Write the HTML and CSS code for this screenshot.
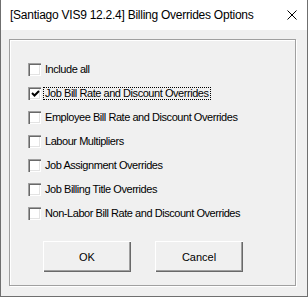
FILE: index.html
```html
<!DOCTYPE html>
<html lang="en">
<head>
    <meta charset="UTF-8">
    <meta name="viewport" content="width=device-width, initial-scale=1.0">
    <title>Billing Overrides Options</title>
    <link rel="stylesheet" href="styles.css">
</head>
<body>
    <div class="window">
        <div class="titlebar">
            <span class="title">[Santiago VIS9 12.2.4] Billing Overrides Options</span>
            <svg class="close" width="10" height="10" viewBox="0 0 10 10">
                <path d="M0.5 0.5 L9.5 9.5 M9.5 0.5 L0.5 9.5" stroke="#000" stroke-width="1" fill="none"/>
            </svg>
        </div>
        <div class="content">
            <div class="group">
                <div class="row">
                    <span class="check"></span>
                    <span class="label">Include all</span>
                </div>
                <div class="row">
                    <span class="check">
                        <svg width="9" height="9" viewBox="0 0 9 9">
                            <path d="M1 4 L3.5 6.5 L8 2" stroke="#000" stroke-width="2" fill="none"/>
                        </svg>
                    </span>
                    <span class="label focus">Job Bill Rate and Discount Overrides</span>
                </div>
                <div class="row">
                    <span class="check"></span>
                    <span class="label">Employee Bill Rate and Discount Overrides</span>
                </div>
                <div class="row">
                    <span class="check"></span>
                    <span class="label">Labour Multipliers</span>
                </div>
                <div class="row">
                    <span class="check"></span>
                    <span class="label">Job Assignment Overrides</span>
                </div>
                <div class="row">
                    <span class="check"></span>
                    <span class="label">Job Billing Title Overrides</span>
                </div>
                <div class="row">
                    <span class="check"></span>
                    <span class="label">Non-Labor Bill Rate and Discount Overrides</span>
                </div>
                <div class="buttons">
                    <button class="btn">OK</button>
                    <button class="btn">Cancel</button>
                </div>
            </div>
        </div>
    </div>
</body>
</html>
```

FILE: styles.css
```css
* {
    padding: 0;
    margin: 0;
    box-sizing: border-box;
}
body {
    background: #f0f0f0;
    font-family: "Liberation Sans", Arial, sans-serif;
}
.window {
    width: 308px;
    height: 297px;
    background: #f0f0f0;
    border: 1px solid #6f6f6f;
    border-top: none;
}
.titlebar {
    height: 30px;
    background: #fff;
    display: flex;
    align-items: center;
    justify-content: space-between;
    padding: 0 10px 0 9px;
}
.title {
    font-size: 12px;
    letter-spacing: -0.25px;
    color: #000;
}
.close {
    margin-top: -1px;
}
.content {
    padding: 9px 0 0 8px;
}
.group {
    width: 287px;
    height: 247px;
    border: 1px solid #a0a0a0;
    box-shadow: inset 1px 1px 0 #fff, 1px 1px 0 #fff;
    padding: 17px 0 0 18px;
}
.row {
    height: 24px;
    display: flex;
    align-items: center;
}
.check {
    width: 13px;
    height: 13px;
    background: #fff;
    box-shadow: inset 1px 1px 0 #a0a0a0, inset 2px 2px 0 #696969, inset -1px -1px 0 #fff, inset -2px -2px 0 #e3e3e3;
    display: flex;
    align-items: center;
    justify-content: center;
}
.check svg {
    margin-left: 1px;
}
.label {
    margin-left: 2px;
    padding: 0 1px;
    border: 1px solid transparent;
    font-size: 11px;
    line-height: 11px;
    letter-spacing: -0.45px;
    color: #000;
}
.label.focus {
    border: 1px dotted #000;
}
.buttons {
    display: flex;
    gap: 24px;
    margin: 16px 0 0 15px;
}
.btn {
    width: 88px;
    height: 31px;
    background: #f0f0f0;
    border: none;
    box-shadow: inset 1px 1px 0 #fff, inset -1px -1px 0 #696969, inset -2px -2px 0 #a0a0a0;
    font-family: "Liberation Sans", Arial, sans-serif;
    font-size: 11px;
    color: #000;
}
```
